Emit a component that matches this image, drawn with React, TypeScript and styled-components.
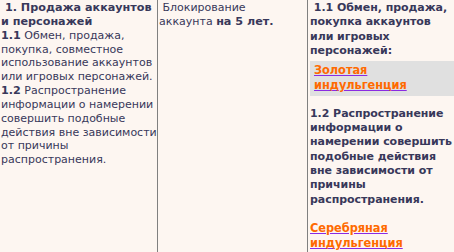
import React from "react";
import styled, { createGlobalStyle } from "styled-components";

const Global = createGlobalStyle`
  html, body { margin: 0; padding: 0; background: #fdf6f1; }
  body { font-family: "DejaVu Sans", Verdana, sans-serif; color: #38385a; }
`;

const Table = styled.div`
  display: grid;
  grid-template-columns: 158px 150px 1fr;
  width: 454px;
  height: 252px;
  background: #fdf6f1;
  overflow: hidden;
`;

const Cell = styled.div<{ $border?: boolean; $pl?: number }>`
  border-right: ${(p) => (p.$border ? "1px solid #808080" : "none")};
  padding: 1px 0 0 ${(p) => p.$pl ?? 1}px;
  font-size: 11px;
  line-height: 13.85px;
  white-space: nowrap;
  overflow: hidden;
`;

const Bold = styled.b`
  font-weight: bold;
  font-size: 11.2px;
`;

const Strong = styled.div`
  font-size: 11px;
  font-weight: bold;
  line-height: 14.3px;
  letter-spacing: -0.05px;
`;

const Gap = styled.div<{ $h: number }>`
  height: ${(p) => p.$h}px;
`;

const Highlight = styled.div`
  background: #e0e0e0;
  margin: 3px 0 0 0;
  padding: 2px 0 2px 4px;
`;

const Link = styled.a`
  color: #ff6a00;
  text-decoration: underline;
  text-decoration-color: #8a2be2;
  text-underline-offset: 1px;
  font-weight: bold;
  font-size: 11.4px;
  cursor: pointer;
`;

export default function App() {
  return (
    <>
      <Global />
      <Table>
        <Cell $border>
          <Bold>&nbsp;1. Продажа аккаунтов</Bold>
          <br />
          <Bold>и персонажей</Bold>
          <br />
          <Bold>1.1</Bold> Обмен, продажа,
          <br />
          покупка, совместное
          <br />
          использование аккаунтов
          <br />
          или игровых персонажей.
          <br />
          <Bold>1.2</Bold> Распространение
          <br />
          информации о намерении
          <br />
          совершить подобные
          <br />
          действия вне зависимости
          <br />
          от причины
          <br />
          распространения.
        </Cell>
        <Cell $border>
          &nbsp;Блокирование
          <br />
          аккаунта <Bold>на 5 лет.</Bold>
        </Cell>
        <Cell $pl={2}>
          <Strong>
            &nbsp;1.1 Обмен, продажа,
            <br />
            покупка аккаунтов
            <br />
            или игровых
            <br />
            персонажей:
          </Strong>
          <Highlight>
            <Strong>
              <Link>Золотая</Link>
              <br />
              <Link>индульгенция</Link>
            </Strong>
          </Highlight>
          <Gap $h={11} />
          <Strong>
            1.2 Распространение
            <br />
            информации о
            <br />
            намерении совершить
            <br />
            подобные действия
            <br />
            вне зависимости от
            <br />
            причины
            <br />
            распространения.
          </Strong>
          <Gap $h={14} />
          <Strong>
            <Link>Серебряная</Link>
            <br />
            <Link>индульгенция</Link>
          </Strong>
        </Cell>
      </Table>
    </>
  );
}
